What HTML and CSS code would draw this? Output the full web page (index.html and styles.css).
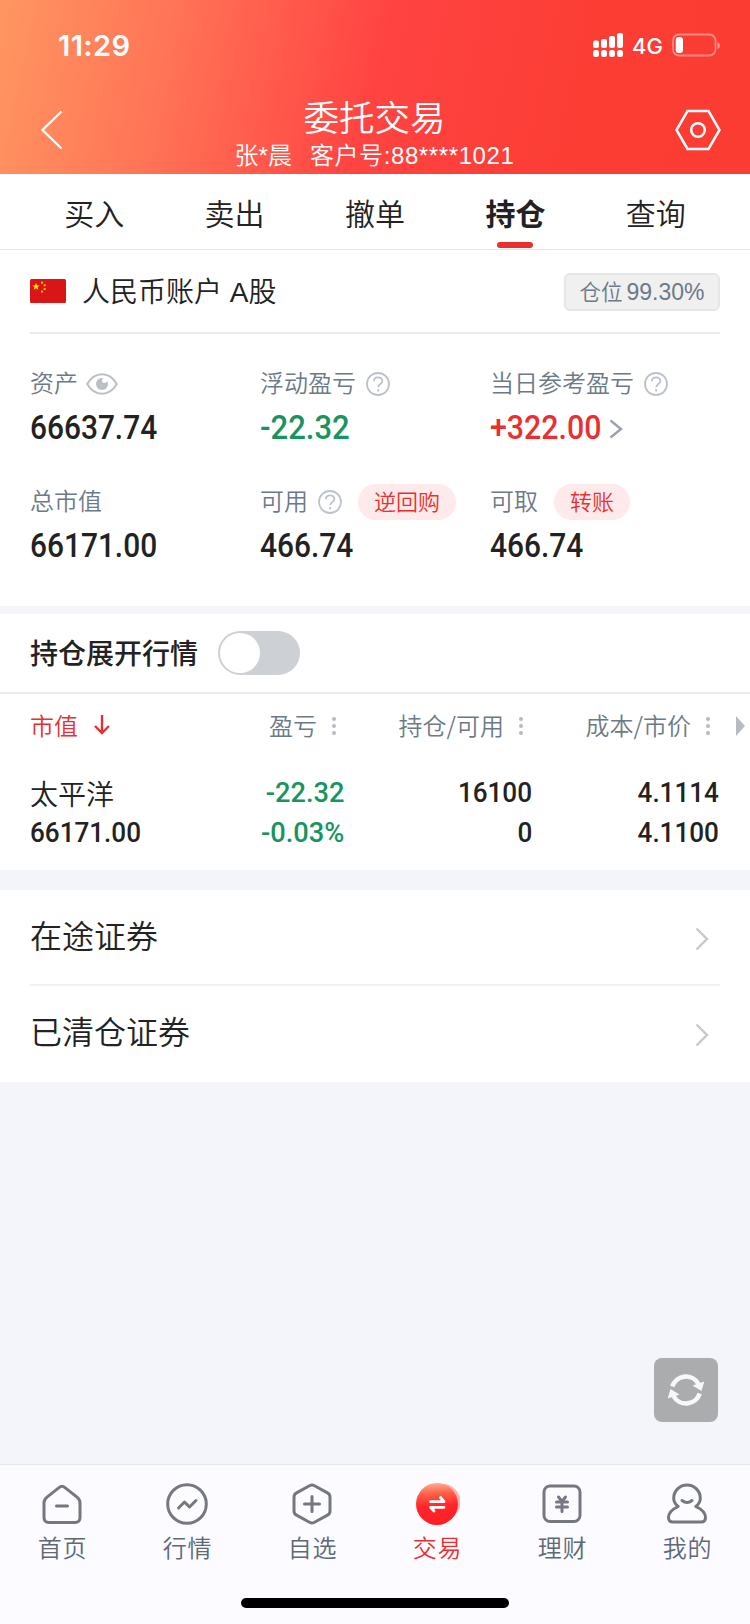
FILE: index.html
```html
<!DOCTYPE html>
<html lang="zh-CN">
<head>
    <meta charset="UTF-8">
    <meta name="viewport" content="width=device-width, initial-scale=1.0">
    <title>委托交易</title>
    <link rel="stylesheet" href="styles.css">
</head>
<body>

<header class="header">
    <div class="status-bar">
        <span class="time">11:29</span>
        <div class="status-icons">
            <svg class="signal" width="32" height="24" viewBox="0 0 32 24" fill="#fff">
                <rect x="1" y="7.500" width="6" height="7.500" rx="2"/>
                <rect x="9" y="6" width="6" height="9" rx="2"/>
                <rect x="17" y="3" width="6" height="12" rx="2"/>
                <rect x="25" y="0" width="6" height="15" rx="2"/>
                <rect x="1" y="17" width="6" height="7" rx="2.500"/>
                <rect x="9" y="17" width="6" height="7" rx="2.500"/>
                <rect x="17" y="17" width="6" height="7" rx="2.500"/>
                <rect x="25" y="17" width="6" height="7" rx="2.500"/>
            </svg>
            <span class="network">4G</span>
            <svg class="battery" width="49" height="24" viewBox="0 0 49 24">
                <rect x="1" y="1.500" width="42.500" height="21" rx="6" fill="none" stroke="#fff" stroke-opacity=".4" stroke-width="1.800"/>
                <path d="M45.500 9v7q2.500-1 2.500-3.500T45.500 9z" fill="#fff" fill-opacity=".45"/>
                <rect x="3.700" y="4" width="7.300" height="16" rx="3" fill="#fff"/>
            </svg>
        </div>
    </div>
    <div class="nav-bar">
        <svg class="back" width="24" height="40" viewBox="0 0 24 40">
            <path d="M21.500 1.500L2.500 20l19 18.500" fill="none" stroke="#fff" stroke-width="2.300"/>
        </svg>
        <div class="nav-title">
            <h1>委托交易</h1>
            <p>张*晨<span class="client">客户号:88****1021</span></p>
        </div>
        <svg class="settings" width="46" height="42" viewBox="0 0 46 42" fill="none" stroke="#fff" stroke-width="2.500">
            <path d="M12.500 2h21L44.500 21l-11 19h-21L1.500 21z"/>
            <circle cx="23" cy="21" r="6.800"/>
        </svg>
    </div>
</header>

<nav class="tabs">
    <a class="tab">买入</a>
    <a class="tab">卖出</a>
    <a class="tab">撤单</a>
    <a class="tab active">持仓</a>
    <a class="tab">查询</a>
</nav>

<section class="account">
    <div class="account-head">
        <svg class="flag" width="36" height="24" viewBox="0 0 36 24">
            <rect width="36" height="24" rx="1.500" fill="#d81618"/>
            <path d="M6 3.800l.95 2.600h2.800L7.500 8.100l.85 2.700L6 9.200l-2.350 1.600.85-2.700L2.250 6.400h2.800z" fill="#ffe600"/>
            <g fill="#ffb800">
                <rect x="11" y="2.600" width="2" height="2"/>
                <rect x="13.700" y="5.300" width="2" height="2"/>
                <rect x="13.700" y="9" width="2" height="2"/>
                <rect x="11" y="11.600" width="2" height="2"/>
            </g>
        </svg>
        <h2>人民币账户 A股</h2>
        <span class="position">仓位<b>99.30%</b></span>
    </div>
    <div class="assets">
        <div class="asset">
            <div class="label">资产
                <svg class="eye" width="32" height="22" viewBox="0 0 32 22">
                    <path d="M1.200 11C5 4.500 10 1.300 16 1.300S27 4.500 30.800 11C27 17.500 22 20.700 16 20.700S5 17.500 1.200 11z" fill="none" stroke="#b9bfc9" stroke-width="2"/>
                    <circle cx="16" cy="11" r="6" fill="#b9bfc9"/>
                    <circle cx="18.500" cy="7.500" r="2.500" fill="#fff"/>
                </svg>
            </div>
            <div class="value"><span class="num">66637.74</span></div>
        </div>
        <div class="asset">
            <div class="label">浮动盈亏
                <svg class="help" width="24" height="24" viewBox="0 0 24 24" fill="none" stroke="#bcc2cb" stroke-width="1.800">
                    <circle cx="12" cy="12" r="11"/>
                    <path d="M7.900 9.300c0-5.200 8.500-5 8.500-.3 0 3-4.200 3-4.200 6.300M12.200 17v2.600"/>
                </svg>
            </div>
            <div class="value green"><span class="num">-22.32</span></div>
        </div>
        <div class="asset">
            <div class="label">当日参考盈亏
                <svg class="help" width="24" height="24" viewBox="0 0 24 24" fill="none" stroke="#bcc2cb" stroke-width="1.800">
                    <circle cx="12" cy="12" r="11"/>
                    <path d="M7.900 9.300c0-5.200 8.500-5 8.500-.3 0 3-4.200 3-4.200 6.300M12.200 17v2.600"/>
                </svg>
            </div>
            <div class="value red"><span class="num">+322.00</span>
                <svg class="more" width="14" height="20" viewBox="0 0 14 20">
                    <path d="M1.500 1.500L12 10 1.500 18.500" fill="none" stroke="#9aa2af" stroke-width="2.400"/>
                </svg>
            </div>
        </div>
        <div class="asset">
            <div class="label">总市值</div>
            <div class="value"><span class="num">66171.00</span></div>
        </div>
        <div class="asset">
            <div class="label">可用
                <svg class="help" width="24" height="24" viewBox="0 0 24 24" fill="none" stroke="#bcc2cb" stroke-width="1.800">
                    <circle cx="12" cy="12" r="11"/>
                    <path d="M7.900 9.300c0-5.200 8.500-5 8.500-.3 0 3-4.200 3-4.200 6.300M12.200 17v2.600"/>
                </svg>
                <span class="pill">逆回购</span>
            </div>
            <div class="value"><span class="num">466.74</span></div>
        </div>
        <div class="asset">
            <div class="label">可取<span class="pill">转账</span></div>
            <div class="value"><span class="num">466.74</span></div>
        </div>
    </div>
</section>

<section class="holdings">
    <div class="expand">
        <h3>持仓展开行情</h3>
        <span class="switch"></span>
    </div>
    <div class="row row-head">
        <div class="sorted">市值
            <svg width="16" height="20" viewBox="0 0 16 20" fill="none" stroke="#e93030" stroke-width="2.400">
                <path d="M8 0v18M1 11l7 7 7-7"/>
            </svg>
        </div>
        <div>盈亏<i class="dots"></i></div>
        <div>持仓/可用<i class="dots"></i></div>
        <div>成本/市价<i class="dots"></i></div>
        <span class="scroll-right"></span>
    </div>
    <div class="row stock">
        <div>
            <p class="name">太平洋</p>
            <p><span class="num">66171.00</span></p>
        </div>
        <div class="green">
            <p><span class="num">-22.32</span></p>
            <p><span class="num">-0.03%</span></p>
        </div>
        <div>
            <p><span class="num">16100</span></p>
            <p><span class="num">0</span></p>
        </div>
        <div>
            <p><span class="num">4.1114</span></p>
            <p><span class="num">4.1100</span></p>
        </div>
    </div>
</section>

<section class="links">
    <a class="link">在途证券
        <svg width="14" height="24" viewBox="0 0 14 24">
            <path d="M1.500 1.500L12 12 1.500 22.500" fill="none" stroke="#c9c9c9" stroke-width="2.400"/>
        </svg>
    </a>
    <a class="link">已清仓证券
        <svg width="14" height="24" viewBox="0 0 14 24">
            <path d="M1.500 1.500L12 12 1.500 22.500" fill="none" stroke="#c9c9c9" stroke-width="2.400"/>
        </svg>
    </a>
</section>

<button class="refresh">
    <svg width="38" height="36" viewBox="0 0 38 36">
        <path d="M5.300 14.500A14.300 14.300 0 0 1 31.500 12M32.700 21.500A14.300 14.300 0 0 1 6.500 24" fill="none" stroke="#f7f8fa" stroke-width="4.600"/>
        <path d="M37.300 9.500L34.500 19 25.500 13.500zM.700 26.500L3.500 17l9 5.500z" fill="#f7f8fa"/>
    </svg>
</button>

<footer class="tab-bar">
    <a class="bar-item">
        <svg width="44" height="44" viewBox="0 0 44 44" fill="none" stroke="#757881" stroke-width="3" stroke-linecap="round" stroke-linejoin="round">
            <path d="M19 5.600q3-2.600 6 0l12 9.500q3 2.500 3 5.500v15q0 5-5 5H9q-5 0-5-5v-15q0-3 3-5.500z"/>
            <path d="M16.500 24h11"/>
        </svg>
        <span>首页</span>
    </a>
    <a class="bar-item">
        <svg width="44" height="44" viewBox="0 0 44 44" fill="none" stroke="#757881" stroke-width="3" stroke-linecap="round" stroke-linejoin="round">
            <circle cx="22" cy="22" r="19.300"/>
            <path d="M13.500 26l6-6 5 5 6.500-6.500"/>
        </svg>
        <span>行情</span>
    </a>
    <a class="bar-item">
        <svg width="44" height="44" viewBox="0 0 44 44" fill="none" stroke="#757881" stroke-width="3" stroke-linecap="round" stroke-linejoin="round">
            <path d="M19.500 3.700q2.500-1.400 5 0l13 7.200q2.500 1.400 2.500 4.200v13.800q0 2.800-2.500 4.200l-13 7.200q-2.500 1.400-5 0l-13-7.200Q4 31.700 4 28.900V15.100q0-2.800 2.500-4.200z"/>
            <path d="M14.500 22h15M22 14.500v15"/>
        </svg>
        <span>自选</span>
    </a>
    <a class="bar-item current">
        <svg width="46" height="44" viewBox="0 0 46 44">
            <defs>
                <linearGradient id="trade" x1=".45" y1="0" x2=".5" y2="1">
                    <stop offset="0" stop-color="#ffab90"/>
                    <stop offset=".25" stop-color="#ff6048"/>
                    <stop offset=".55" stop-color="#ff252a"/>
                    <stop offset="1" stop-color="#ff1f25"/>
                </linearGradient>
            </defs>
            <circle cx="28.500" cy="20" r="18" fill="#ffb3ae"/>
            <circle cx="23" cy="22" r="21" fill="url(#trade)"/>
            <path d="M16.500 19.700h13.500l-3.500-4.200M30 25.300H16.500l3.500 3.700" fill="none" stroke="#fff" stroke-width="2.800" stroke-linecap="round" stroke-linejoin="round"/>
        </svg>
        <span>交易</span>
    </a>
    <a class="bar-item">
        <svg width="44" height="44" viewBox="0 0 44 44" fill="none" stroke="#757881" stroke-width="3" stroke-linecap="round" stroke-linejoin="round">
            <rect x="4" y="4" width="36" height="35.500" rx="6"/>
            <path d="M18.500 15l3.500 4.500 3.500-4.500M16.500 20h11M16.500 25h11M22 20v9.500"/>
        </svg>
        <span>理财</span>
    </a>
    <a class="bar-item">
        <svg width="44" height="44" viewBox="0 0 44 44" fill="none" stroke="#757881" stroke-width="3" stroke-linecap="round" stroke-linejoin="round">
            <path d="M13.200 24.500C9.800 22 8.700 19.500 8.700 16.300a13.300 13.300 0 0 1 26.600 0c0 3.200-1.100 5.700-4.500 8.200 6.500 3 9.700 6.700 9.700 11 0 3-1.500 4.500-4.500 4.500H8c-3 0-4.500-1.500-4.500-4.500 0-4.300 3.200-8 9.700-11z"/>
            <path d="M17 18.500q5 4 10 0"/>
        </svg>
        <span>我的</span>
    </a>
    <div class="home-indicator"></div>
</footer>

</body>
</html>
```
FILE: styles.css
```css
* {
    box-sizing: border-box;
}
body {
    font-family: "Liberation Sans", "Noto Sans CJK SC", sans-serif;
    font-weight: 350;
    background-color: #f4f5fa;
    color: #222;
    display: flex;
    flex-direction: column;
    width: 750px;
    height: 1624px;
    margin: 0;
    overflow: hidden;
}
h1, h2, h3, p {
    margin: 0;
    font-weight: inherit;
}
svg {
    display: block;
    flex: none;
}
.header {
    height: 174px;
    color: #fff;
    background: linear-gradient(102deg, #ff9661 0%, #ff7557 22%, #ff5c4d 36%, #ff4341 50%, #fb3d34 78%, #fa3c32 100%);
}
.status-bar {
    height: 90px;
    padding: 0 29px 0 58px;
    display: flex;
    justify-content: space-between;
    align-items: center;
}
.time {
    font-family: Inter, sans-serif;
    font-size: 29px;
    font-weight: 600;
    letter-spacing: .4px;
}
.status-icons {
    display: flex;
    align-items: center;
}
.network {
    font-family: Inter, sans-serif;
    font-size: 22px;
    font-weight: 500;
    margin: 2px 9px 0 8px;
}
.nav-bar {
    height: 84px;
    padding: 0 29px 4px 40px;
    display: flex;
    align-items: center;
}
.nav-title {
    flex: 1;
    margin-left: 10px;
    text-align: center;
    padding-top: 14px;
}
.nav-title h1 {
    font-size: 35.5px;
    line-height: 38px;
    font-weight: 350;
}
.nav-title p {
    font-size: 24px;
    line-height: 36px;
}
.client {
    margin-left: 18px;
    letter-spacing: .6px;
}
.tabs {
    height: 76px;
    padding: 0 24px;
    display: flex;
    background-color: #fff;
    border-bottom: 1px solid #e8e8e8;
}
.tab {
    position: relative;
    flex: 1;
    text-align: center;
    font-size: 30px;
    line-height: 82px;
}
.tab.active {
    font-weight: 700;
}
.tab.active::after {
    content: "";
    position: absolute;
    left: 50%;
    bottom: 1px;
    width: 36px;
    height: 6px;
    margin-left: -18px;
    border-radius: 3px;
    background-color: #e93030;
}
.account {
    height: 356px;
    padding: 0 30px;
    background-color: #fff;
}
.account-head {
    height: 84px;
    display: flex;
    align-items: center;
    border-bottom: 2px solid #ebebeb;
}
.account-head h2 {
    margin-left: 16px;
    font-size: 28px;
    line-height: 43px;
    padding-top: 2px;
}
.position {
    margin: 1px 0 0 auto;
    width: 156px;
    height: 38px;
    border: 2px solid #e6e6e6;
    border-radius: 6px;
    background-color: #f0f0f0;
    color: #6c7a87;
    font-size: 21.5px;
    line-height: 34px;
    text-align: center;
    white-space: nowrap;
}
.position b {
    margin-left: 4px;
    font-weight: 400;
    font-size: 23px;
}
.assets {
    display: grid;
    grid-template-columns: repeat(3, 230px);
    grid-auto-rows: 118px;
    padding-top: 30px;
}
.label {
    height: 40px;
    display: flex;
    align-items: center;
    color: #6c7a87;
    font-size: 24px;
    line-height: 40px;
    white-space: nowrap;
}
.eye {
    margin-left: 8px;
}
.help {
    margin-left: 10px;
}
.pill {
    height: 36px;
    margin-left: 16px;
    padding: 0 16px;
    border-radius: 18px;
    background-color: #feeaea;
    color: #e93030;
    font-size: 22px;
    line-height: 37px;
}
.value {
    height: 46px;
    display: flex;
    align-items: center;
    font-family: Roboto, sans-serif;
    font-size: 33px;
    font-weight: 500;
}
.more {
    margin: 4px 0 0 -2px;
}
/* narrow figures */
.num {
    display: inline-block;
    transform: scaleX(.905);
    transform-origin: left;
}
.green {
    color: #17945f;
}
.green .num {
    transform: scaleX(.94);
}
.red {
    color: #e93030;
}
.red .num {
    transform: scaleX(.92);
}
.holdings {
    height: 256px;
    margin-top: 8px;
    background-color: #fff;
}
.expand {
    height: 80px;
    padding: 0 30px;
    display: flex;
    align-items: center;
    border-bottom: 2px solid #ebebeb;
}
.expand h3 {
    font-size: 28px;
    line-height: 40px;
    font-weight: 500;
    padding-top: 3px;
}
.switch {
    width: 82px;
    height: 44px;
    margin-left: 20px;
    padding: 2px;
    border-radius: 22px;
    background-color: #cdd0d5;
}
.switch::before {
    content: "";
    display: block;
    width: 40px;
    height: 40px;
    border-radius: 50%;
    background-color: #fff;
}
.row {
    position: relative;
    display: grid;
    grid-template-columns: 128px 187px 187px 187px;
    padding: 0 30px;
}
.row-head {
    height: 64px;
    color: #6c7a87;
    font-family: "Noto Sans CJK SC", sans-serif;
    font-size: 24px;
    line-height: 40px;
}
.row-head div {
    display: flex;
    align-items: center;
    justify-content: flex-end;
    padding: 0 9px 2px 0;
}
.row-head .sorted {
    justify-content: flex-start;
    color: #e93030;
}
.sorted svg {
    margin-left: 16px;
}
.dots {
    width: 4px;
    height: 4px;
    margin: 2px 0 0 15px;
    border-radius: 50%;
    background-color: #b5bbc3;
    box-shadow: 0 -7px #b5bbc3, 0 7px #b5bbc3;
}
.scroll-right {
    position: absolute;
    right: 5px;
    top: 22px;
    border: 10px solid transparent;
    border-left: 9px solid #b5bcc3;
    border-right: 0;
}
.stock {
    font-family: Roboto, "Noto Sans CJK SC", sans-serif;
    font-size: 28.5px;
    font-weight: 500;
    text-align: right;
    padding-top: 15px;
}
.stock p {
    height: 40px;
    line-height: 40px;
}
.stock .num {
    transform: scaleX(.915);
    transform-origin: right;
}
.stock .green .num {
    transform: translateX(-1px) scaleX(.955);
}
.stock div:first-child {
    text-align: left;
}
.stock div:first-child .num {
    transform-origin: left;
}
.stock .name {
    font-size: 28px;
    line-height: 45px;
    font-weight: 350;
}
.links {
    margin-top: 20px;
    padding: 0 30px;
    background-color: #fff;
}
.link {
    height: 96px;
    padding: 0 11px 2px 0;
    display: flex;
    justify-content: space-between;
    align-items: center;
    font-size: 32px;
    line-height: 92px;
}
.link svg {
    margin-top: 3px;
}
.link:first-child {
    padding-bottom: 0;
    border-bottom: 2px solid #f1f1f1;
}
.refresh {
    width: 64px;
    height: 64px;
    margin: auto 32px 42px auto;
    padding: 0;
    display: flex;
    align-items: center;
    justify-content: center;
    border: none;
    border-radius: 8px;
    background-color: #abacae;
}
.tab-bar {
    height: 160px;
    display: grid;
    grid-template-columns: repeat(6, 1fr);
    grid-template-rows: 1fr auto;
    padding: 17px 0 16px;
    background-color: #fcfbff;
    border-top: 1px solid #e6e6ea;
}
.bar-item {
    display: flex;
    flex-direction: column;
    align-items: center;
    color: #5d6975;
    font-size: 24px;
    line-height: 46px;
    letter-spacing: .7px;
}
.bar-item svg {
    margin-right: 1px;
}
.current {
    color: #e93030;
}
.home-indicator {
    grid-column: 1 / -1;
    justify-self: center;
    width: 268px;
    height: 10px;
    border-radius: 5px;
    background-color: #000;
}
```
